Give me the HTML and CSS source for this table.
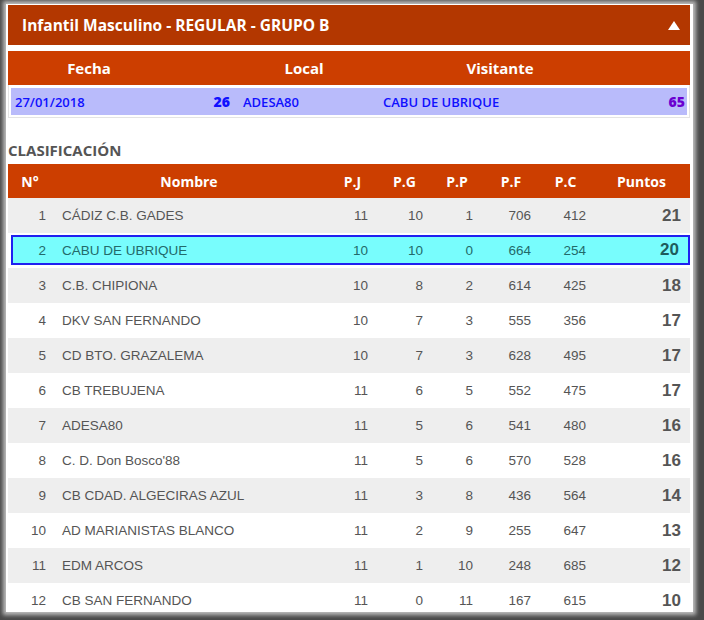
FILE: index.html
```html
<!DOCTYPE html>
<html lang="es">
<head>
<meta charset="utf-8">
<title>Infantil Masculino - REGULAR - GRUPO B</title>
<link rel="stylesheet" href="styles.css">
</head>
<body>
<div class="frame">
  <div class="titlebar">
    <span class="title">Infantil Masculino - REGULAR - GRUPO B</span>
    <svg class="caret" width="12" height="9" viewBox="0 0 12 9"><polygon points="6,0 12,9 0,9" fill="#fff"/></svg>
  </div>

  <div class="match-head">
    <div>Fecha</div><div></div><div>Local</div><div>Visitante</div><div></div>
  </div>
  <div class="match-box">
    <div class="match-row">
      <div class="m-date">27/01/2018</div>
      <div class="m-score">26</div>
      <div class="m-team">ADESA80</div>
      <div class="m-team">CABU DE UBRIQUE</div>
      <div class="m-score m-score-v">65</div>
    </div>
  </div>

  <h2 class="section">CLASIFICACIÓN</h2>

  <div class="standings">
    <div class="row head">
      <div>N°</div><div>Nombre</div><div>P.J</div><div>P.G</div><div>P.P</div><div>P.F</div><div>P.C</div><div>Puntos</div>
    </div>
    <div class="row odd"><div>1</div><div>CÁDIZ C.B. GADES</div><div>11</div><div>10</div><div>1</div><div>706</div><div>412</div><div>21</div></div>
    <div class="row mine"><div>2</div><div>CABU DE UBRIQUE</div><div>10</div><div>10</div><div>0</div><div>664</div><div>254</div><div>20</div></div>
    <div class="row odd"><div>3</div><div>C.B. CHIPIONA</div><div>10</div><div>8</div><div>2</div><div>614</div><div>425</div><div>18</div></div>
    <div class="row"><div>4</div><div>DKV SAN FERNANDO</div><div>10</div><div>7</div><div>3</div><div>555</div><div>356</div><div>17</div></div>
    <div class="row odd"><div>5</div><div>CD BTO. GRAZALEMA</div><div>10</div><div>7</div><div>3</div><div>628</div><div>495</div><div>17</div></div>
    <div class="row"><div>6</div><div>CB TREBUJENA</div><div>11</div><div>6</div><div>5</div><div>552</div><div>475</div><div>17</div></div>
    <div class="row odd"><div>7</div><div>ADESA80</div><div>11</div><div>5</div><div>6</div><div>541</div><div>480</div><div>16</div></div>
    <div class="row"><div>8</div><div>C. D. Don Bosco'88</div><div>11</div><div>5</div><div>6</div><div>570</div><div>528</div><div>16</div></div>
    <div class="row odd"><div>9</div><div>CB CDAD. ALGECIRAS AZUL</div><div>11</div><div>3</div><div>8</div><div>436</div><div>564</div><div>14</div></div>
    <div class="row"><div>10</div><div>AD MARIANISTAS BLANCO</div><div>11</div><div>2</div><div>9</div><div>255</div><div>647</div><div>13</div></div>
    <div class="row odd"><div>11</div><div>EDM ARCOS</div><div>11</div><div>1</div><div>10</div><div>248</div><div>685</div><div>12</div></div>
    <div class="row"><div>12</div><div>CB SAN FERNANDO</div><div>11</div><div>0</div><div>11</div><div>167</div><div>615</div><div>10</div></div>
  </div>
</div>
</body>
</html>
```

FILE: styles.css
```css
html, body {
  margin: 0;
  padding: 0;
}
body {
  background: #4a4a4a;
  width: 704px;
  height: 620px;
  overflow: hidden;
}
.frame {
  box-sizing: border-box;
  margin: 4px 11px 0 6px;
  width: 687px;
  height: 608px;
  background: #fff;
  box-shadow: 0 0 4px 3px #bdbdbd;
  padding: 1px 3px 0 2px;
  overflow: hidden;
}
.titlebar {
  height: 40px;
  background: #b33700;
  display: flex;
  align-items: center;
  justify-content: space-between;
  padding: 0 10px 0 14px;
}
.title {
  font-family: "Open Sans", sans-serif;
  font-weight: 700;
  font-size: 15.5px;
  color: #fff;
}
.caret {
  display: block;
  margin-top: 1px;
}
.match-head {
  margin-top: 6px;
  height: 34px;
  background: #cc3e00;
  display: grid;
  grid-template-columns: 162px 62px 144px 248px 66px;
  align-items: center;
  text-align: center;
  font-family: "Open Sans", sans-serif;
  font-weight: 700;
  font-size: 15px;
  color: #fff;
}
.match-box {
  border: 1px solid #e4e4e4;
  border-top: 0;
  padding: 3px 2px 2px 2px;
}
.match-row {
  height: 27px;
  background: #b9bbfb;
  display: grid;
  grid-template-columns: 160px 62px 140px 248px 66px;
  align-items: center;
  font-family: "Open Sans", sans-serif;
  font-size: 13px;
  font-weight: 600;
  color: #1010ff;
}
.m-date { padding-left: 4px; }
.m-score {
  text-align: right;
  font-size: 14px;
  font-weight: 800;
  padding-right: 3px;
}
.m-team { padding-left: 10px; }
.m-score-v {
  color: #6a00d0;
  padding-right: 2px;
}
.section {
  margin: 22px 0 0 0;
  height: 24px;
  font-family: "Open Sans", sans-serif;
  font-weight: 700;
  font-size: 15px;
  color: #555;
  line-height: 20px;
}
.standings {
  font-family: "Liberation Sans", Arial, sans-serif;
  font-size: 13.5px;
  color: #555;
}
.row {
  display: grid;
  grid-template-columns: 44px 274px 53px 51px 54px 54px 55px 97px;
  height: 35px;
  align-items: center;
}
.row > div { text-align: right; }
.row > div:nth-child(1) { padding-right: 6px; }
.row > div:nth-child(2) { text-align: left; padding-left: 10px; }
.row > div:nth-child(3) { padding-right: 11px; }
.row > div:nth-child(4) { padding-right: 7px; }
.row > div:nth-child(5) { padding-right: 11px; }
.row > div:nth-child(6) { padding-right: 7px; }
.row > div:nth-child(7) { padding-right: 7px; }
.row > div:nth-child(8) {
  padding-right: 9px;
  font-weight: 700;
  font-size: 17px;
}
.row.head {
  height: 34px;
  background: #cc3e00;
  color: #fff;
  font-family: "Open Sans", sans-serif;
  font-weight: 700;
  font-size: 14px;
}
.row.head > div {
  text-align: center;
  padding: 0;
  font-size: 14px;
}
.row.odd { background: #eeeeee; }
.row.mine {
  box-sizing: border-box;
  height: 30px;
  margin: 2px 0 3px 3px;
  border: 2px solid #2020f0;
  background: #78fdfd;
  color: #236a6a;
  grid-template-columns: 39px 274px 53px 51px 54px 54px 55px 95px;
}
.row.mine > div:nth-child(8) { color: #1e5c5c; }
```
